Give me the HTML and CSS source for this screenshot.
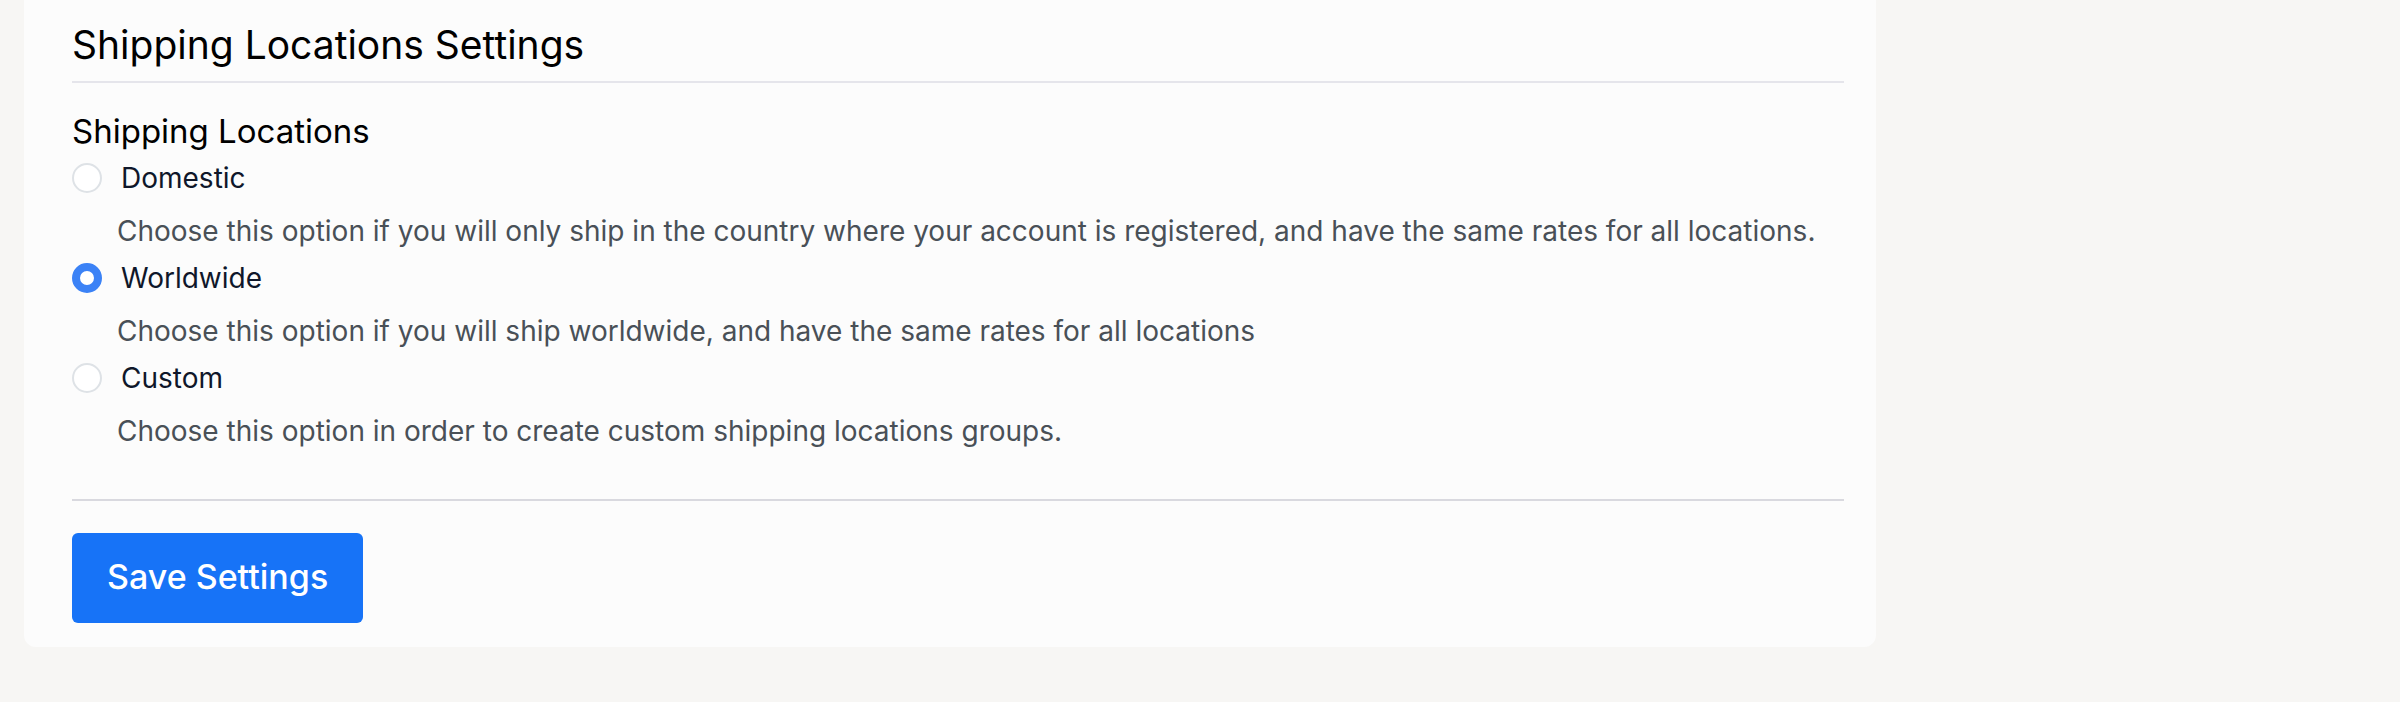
FILE: index.html
```html
<!DOCTYPE html>
<html lang="en">
<head>
    <meta charset="UTF-8">
    <meta name="viewport" content="width=device-width, initial-scale=1.0">
    <title>Shipping Locations Settings</title>
    <link rel="stylesheet" href="styles.css">
</head>
<body>
    <form class="settings-card">
        <h1>Shipping Locations Settings</h1>

        <fieldset class="locations">
            <legend>Shipping Locations</legend>
            <div class="option">
                <input type="radio" name="location" id="domestic" value="domestic" aria-describedby="domesticHelp">
                <label for="domestic">Domestic</label>
            </div>
            <p class="help" id="domesticHelp">Choose this option if you will only ship in the country where your account is registered, and have the same rates for all locations.</p>
            <div class="option">
                <input type="radio" name="location" id="worldwide" value="worldwide" aria-describedby="worldwideHelp" checked>
                <label for="worldwide">Worldwide</label>
            </div>
            <p class="help" id="worldwideHelp">Choose this option if you will ship worldwide, and have the same rates for all locations</p>
            <div class="option">
                <input type="radio" name="location" id="custom" value="custom" aria-describedby="customHelp">
                <label for="custom">Custom</label>
            </div>
            <p class="help" id="customHelp">Choose this option in order to create custom shipping locations groups.</p>
        </fieldset>

        <div class="actions">
            <button type="submit">Save Settings</button>
        </div>
    </form>
</body>
</html>
```
FILE: styles.css
```css
:root {
    --primary: #1773f7;
    --radio: #3b82f6;
    --page: #f7f6f4;
    --card: #fcfcfc;
    --dark: #0f172a;
    --muted: #495057;
}
* {
    box-sizing: border-box;
}
body {
    margin: 0;
    padding: 0 24px;
    font-family: 'Inter', sans-serif;
    background-color: var(--page);
    color: #000;
}
.settings-card {
    width: 78.75%;
    padding: 8px 32px 24px 48px;
    background-color: var(--card);
    border-radius: 0 0 12px 12px;
}
h1 {
    margin: 0 0 24px;
    padding: 9px 0 8px;
    border-bottom: 2px solid #e5e5eb;
    font-size: 39px;
    line-height: 56px;
    font-weight: 400;
}
.locations {
    margin: 0;
    padding: 0 0 44px;
    border: 0;
}
legend {
    padding: 0;
    font-size: 33px;
    line-height: 48px;
}
.option {
    display: flex;
    align-items: center;
    gap: 19px;
    height: 46px;
}
.option input {
    appearance: none;
    width: 30px;
    height: 30px;
    margin: 0;
    border: 2px solid #dee2e6;
    border-radius: 50%;
    background-color: #fff;
}
.option input:checked {
    border: 8px solid var(--radio);
}
.option label {
    font-size: 28px;
    color: var(--dark);
}
.help {
    margin: 0;
    padding: 8px 0 2px 45px;
    font-size: 28px;
    line-height: 44px;
    color: var(--muted);
}
.actions {
    padding-top: 32px;
    border-top: 2px solid #d9d9df;
}
button {
    display: block;
    padding: 16px 35px 18px;
    border: 0;
    border-radius: 6px;
    background-color: var(--primary);
    color: #fff;
    font-family: inherit;
    font-size: 34px;
    font-weight: 500;
    line-height: 56px;
}
```
